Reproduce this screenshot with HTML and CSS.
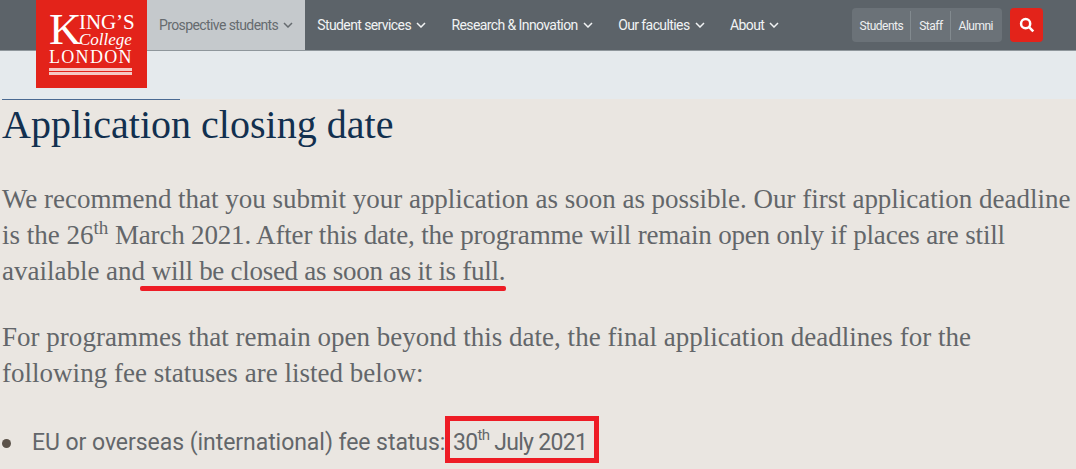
FILE: index.html
```html
<!DOCTYPE html>
<html lang="en">
<head>
<meta charset="utf-8">
<title>Application closing date</title>
<link rel="stylesheet" href="styles.css">
</head>
<body>
<header class="topbar">
  <a class="logo">
    <span class="logo-top"><span class="logo-k">K</span><span class="logo-stack"><span class="logo-ings">ING’S</span><span class="logo-college">College</span></span></span>
    <span class="logo-london">LONDON</span>
    <span class="logo-rule first"></span>
    <span class="logo-rule"></span>
  </a>
  <nav class="mainnav">
    <a class="navitem active">Prospective students <svg class="chev" viewBox="0 0 10 6"><path d="M1 1l4 4 4-4"/></svg></a>
    <a class="navitem">Student services <svg class="chev" viewBox="0 0 10 6"><path d="M1 1l4 4 4-4"/></svg></a>
    <a class="navitem">Research &amp; Innovation <svg class="chev" viewBox="0 0 10 6"><path d="M1 1l4 4 4-4"/></svg></a>
    <a class="navitem">Our faculties <svg class="chev" viewBox="0 0 10 6"><path d="M1 1l4 4 4-4"/></svg></a>
    <a class="navitem">About <svg class="chev" viewBox="0 0 10 6"><path d="M1 1l4 4 4-4"/></svg></a>
  </nav>
  <div class="tools">
    <div class="audience"><a>Students</a><a>Staff</a><a>Alumni</a></div>
    <a class="search"><svg viewBox="0 0 14 14"><circle cx="5.8" cy="5.8" r="4"/><path d="M8.8 8.8l3.7 3.7"/></svg></a>
  </div>
</header>
<div class="subbar"></div>
<main class="content">
  <h2 class="title">Application closing date</h2>
  <p class="para">We recommend that you submit your application as soon as possible. Our first application deadline is the 26<sup>th</sup> <span class="tight-a">March 2021. After this date, the programme will remain open only if places are still</span> available and <span class="tight-b">will be closed as soon as it is full.</span></p>
  <p class="para second">For programmes that remain open beyond this date, the final application deadlines for the following fee statuses are listed below:</p>
  <ul class="list">
    <li><span>EU or overseas (international) fee status: <span class="date">30<sup>th</sup> July 2021</span></span></li>
  </ul>
  <span class="mark-line"></span>
  <span class="mark-box"></span>
</main>
</body>
</html>
```
FILE: styles.css
```css
* { box-sizing: border-box; }
html, body { margin: 0; padding: 0; }
body { width: 1076px; height: 469px; overflow: hidden; background: #eae6e1; position: relative; }
.topbar { height: 51px; background: #5c6369; border-bottom: 1px solid #8f979c; display: flex; padding-left: 147px; font-family: "Roboto", sans-serif; }
.logo { position: absolute; left: 36px; top: 0; width: 111px; height: 88px; background: #e3231a; color: #fff; font-family: "Liberation Serif", serif; display: flex; flex-direction: column; padding: 13px 14px 0 13px; }
.logo-top { display: flex; height: 32px; }
.logo-k { font-size: 45px; line-height: 32px; width: 30px; flex: none; }
.logo-stack { display: flex; flex-direction: column; }
.logo-ings { font-size: 21px; line-height: 18px; letter-spacing: -0.1px; }
.logo-college { font-size: 17px; line-height: 17px; font-style: italic; }
.logo-london { font-size: 18px; line-height: 19px; margin-top: 3px; letter-spacing: 1.3px; white-space: nowrap; }
.logo-rule { height: 3px; background: #f6c9c4; margin-top: 1px; margin-right: 1px; }
.mainnav { display: flex; }
.navitem { display: flex; align-items: center; gap: 5px; font-size: 14px; letter-spacing: -0.6px; color: #f1f3f4; padding: 0 13.5px 1px 12px; white-space: nowrap; }
.navitem.active { background: #c5c9cc; color: #666b6f; padding-right: 12px; }
.chev { width: 10px; height: 6px; fill: none; stroke: currentColor; stroke-width: 1.5; }
.tools { margin-left: auto; display: flex; align-items: flex-start; gap: 8px; padding: 8px 33px 0 0; }
.audience { display: flex; height: 34px; background: #6b7278; border-radius: 4px; align-items: center; font-size: 12px; letter-spacing: -0.5px; color: #eef0f1; padding: 0 9px 0 8px; }
.audience a { padding: 0 7px 0 8px; height: 29px; line-height: 31px; border-left: 1px solid #828a8f; }
.audience a:first-child { border-left: 0; padding-left: 0; }
.audience a:last-child { padding-right: 0; }
.search { width: 33px; height: 34px; background: #e3231a; border-radius: 4px; display: flex; align-items: center; justify-content: center; }
.search svg { width: 16px; height: 16px; fill: none; stroke: #fff; stroke-width: 2.2; }
.subbar { height: 48px; background: #e5eaed; }
.content { padding: 0 0 0 2px; color: #63666a; font-family: "Liberation Serif", serif; }
.title { margin: 0; width: 178px; border-top: 1px solid #4a6a92; font-family: "Liberation Serif", serif; font-weight: 400; font-size: 40px; line-height: 49px; color: #12304f; white-space: nowrap; letter-spacing: 0.02px; }
.para { margin: 0; font-size: 27px; line-height: 36px; letter-spacing: -0.01px; width: 1072px; padding-top: 32px; }
.para.second { padding-top: 30px; letter-spacing: 0.02px; }
.tight-a { letter-spacing: -0.17px; }
.tight-b { letter-spacing: -0.28px; }
sup { font-size: 19px; line-height: 0; vertical-align: 10px; }
.list { margin: 35px 0 0; padding: 0; font-family: "Roboto", sans-serif; font-size: 23px; line-height: 34px; letter-spacing: -0.05px; list-style: none; }
.list li { display: flex; align-items: center; gap: 21px; }
.list li::before { content: ""; width: 9px; height: 9px; border-radius: 50%; background: #5b5249; flex: none; }
.date { letter-spacing: -0.7px; margin-left: 2px; }
.list sup { font-size: 15px; }
.mark-line { position: absolute; left: 140px; top: 286px; width: 366px; height: 5px; background: #ee1c25; border-radius: 2px; }
.mark-box { position: absolute; left: 445px; top: 416px; width: 154px; height: 47px; border: 5px solid #ee1c25; }
```
